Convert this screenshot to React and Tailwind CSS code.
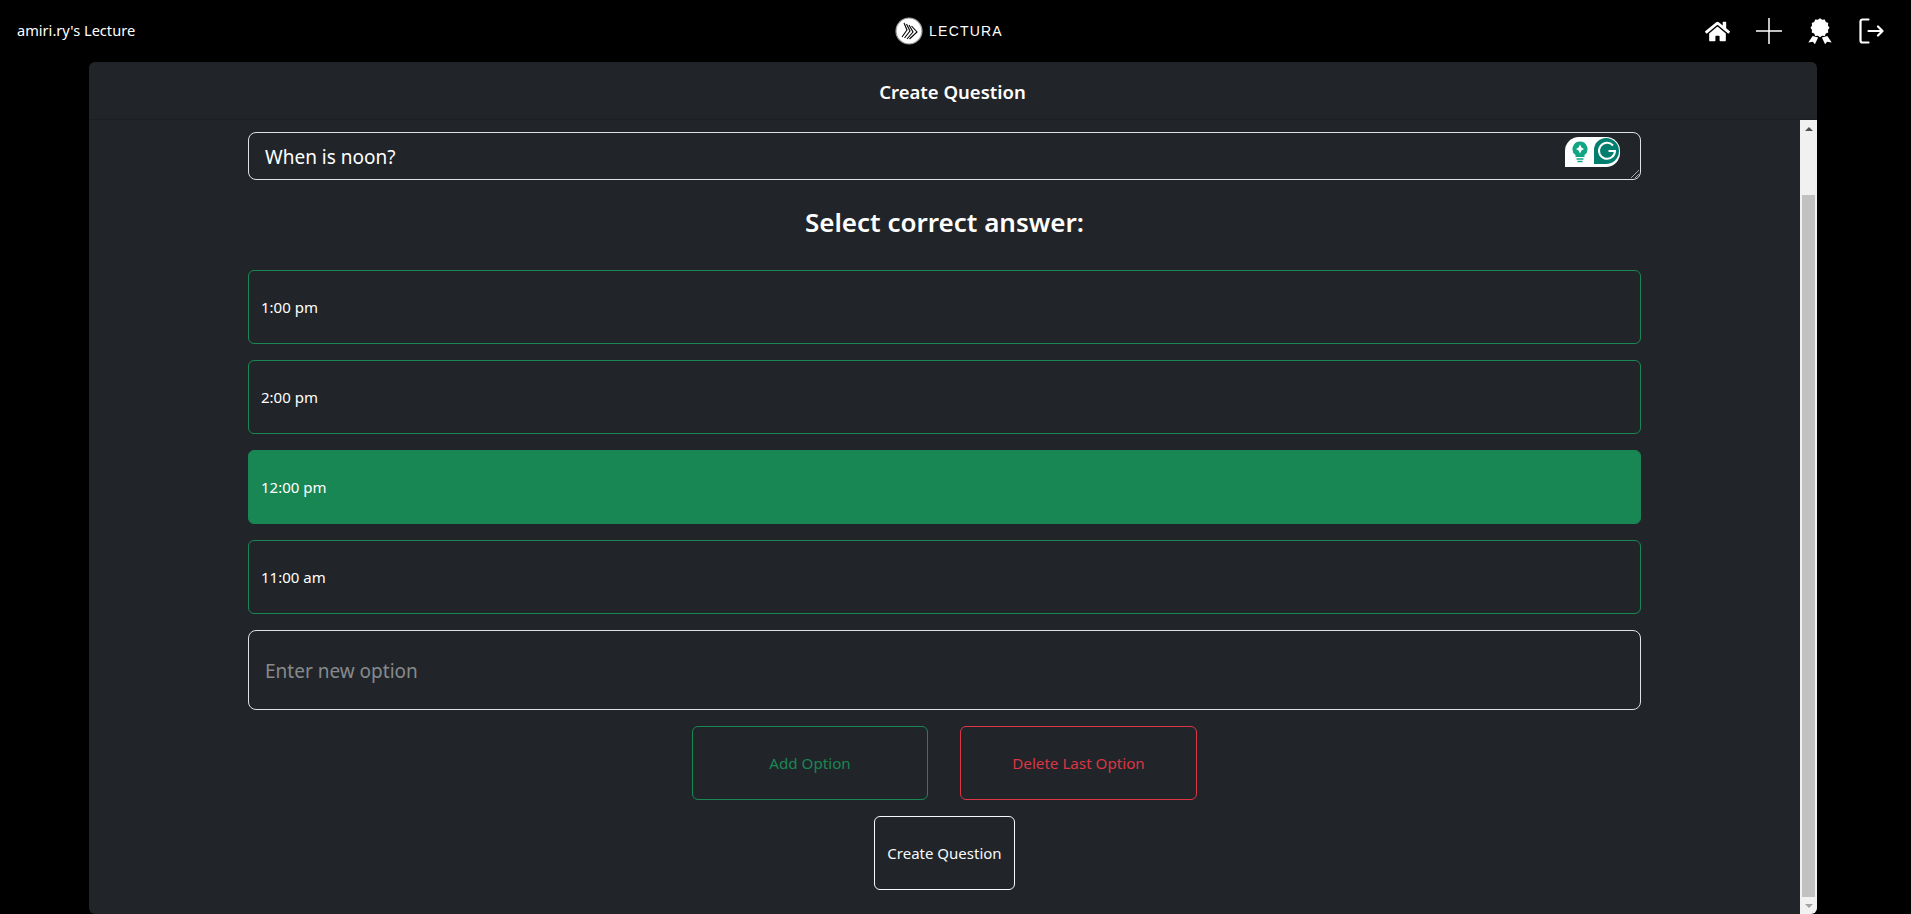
import React from "react";
import { FaHome } from "react-icons/fa";

function Logo() {
  return (
    <div className="flex items-center gap-[6px] ml-[-3px]">
      <svg width="28" height="28" viewBox="0 0 28 28">
        <circle cx="14" cy="14" r="13" fill="#fff" stroke="#999" strokeWidth="1.2" />
        <g fill="none" stroke="#000" strokeWidth="1.1">
          <path d="M9 6 L12 13 L7 20" />
          <path d="M11.5 7 L15 14 L9.5 21" />
          <path d="M14 8 L18 15 L12 22" />
          <path d="M16.5 9 L22 15 L14.5 22" />
        </g>
      </svg>
      <span className="text-white font-['Liberation_Sans',sans-serif] text-[14px] tracking-[1.2px] leading-none">LECTURA</span>
    </div>
  );
}

function Award() {
  const pts = [];
  for (let i = 0; i < 24; i++) {
    const r = i % 2 === 0 ? 8.8 : 7.6;
    const a = (i * Math.PI) / 12;
    pts.push(`${(12 + r * Math.sin(a)).toFixed(2)},${(9 - r * Math.cos(a)).toFixed(2)}`);
  }
  return (
    <svg width="26" height="26" viewBox="0 0 24 24" fill="#fff">
      <polygon points={pts.join(" ")} />
      <path d="M5.2 16.5L1.2 22.6l4.2-.6 1.9 2.2 3-6.1z" />
      <path d="M18.8 16.5l4 6.1-4.2-.6-1.9 2.2-3-6.1z" />
    </svg>
  );
}

function Option({ label, active }) {
  return (
    <div className={active
      ? "h-[74px] shrink-0 flex items-center px-3 rounded-md border border-[#198754] bg-[#198754] text-white text-[15px]"
      : "h-[74px] shrink-0 flex items-center px-3 rounded-md border border-[#198754] text-white text-[15px]"}>
      {label}
    </div>
  );
}

function Scrollbar() {
  return (
    <div className="w-[17px] shrink-0 bg-[#f1f1f1] flex flex-col items-center">
      <div className="h-[17px] shrink-0 flex items-center justify-center">
        <div className="w-0 h-0 border-x-[4px] border-x-transparent border-b-[4px] border-b-[#505050]" />
      </div>
      <div className="flex-1" />
      <div className="w-[13px] h-[702px] shrink-0 bg-[#c1c1c1]" />
      <div className="h-[17px] shrink-0 flex items-center justify-center">
        <div className="w-0 h-0 border-x-[4px] border-x-transparent border-t-[4px] border-t-[#a3a3a3]" />
      </div>
    </div>
  );
}

function Grammarly() {
  return (
    <div className="absolute right-[20px] top-[4px] w-[55px] h-[30px] bg-white rounded-tl-[14px] rounded-r-[14px] flex">
      <div className="w-[29px] flex items-center justify-center">
        <svg width="16" height="22" viewBox="0 0 16 22">
          <path d="M8 0.5a7.5 7.5 0 0 0-4.5 13.5v2h9v-2A7.5 7.5 0 0 0 8 0.5z" fill="#11a683" />
          <path d="M8 3.5 L9.5 6.5 L12 8 L9.5 9.5 L8 12.5 L6.5 9.5 L4 8 L6.5 6.5z" fill="#fff" />
          <path d="M4.5 18h7M5.5 20.5h5" stroke="#11a683" strokeWidth="1.6" />
        </svg>
      </div>
      <div className="w-[25px] h-[26px] mt-[1px] bg-[#027e6f] rounded-tl-[12px] rounded-r-[13px] flex items-center justify-center">
        <svg width="20" height="20" viewBox="0 0 20 20" fill="none">
          <path d="M16 4.5A8 8 0 1 0 18 10h-6.5" stroke="#fff" strokeWidth="2" />
        </svg>
      </div>
    </div>
  );
}

export default function App() {
  return (
    <div className="h-[914px] w-full bg-black overflow-hidden flex flex-col font-['Noto_Sans','Open_Sans',sans-serif] text-white">
      <header className="h-[62px] shrink-0 grid grid-cols-3 items-center pl-[17px] pr-[27px]">
        <div className="text-[14.6px]">amiri.ry's Lecture</div>
        <div className="flex justify-center"><Logo /></div>
        <div className="flex justify-end items-center gap-[25px]">
          <span className="w-[26px] h-[26px] flex items-center justify-center"><FaHome size={25} className="text-white" /></span>
          <svg width="26" height="26" viewBox="0 0 26 26" stroke="#fff" strokeWidth="1.5"><path d="M13 0v26M0 13h26" /></svg>
          <Award />
          <svg width="26" height="26" viewBox="0 0 26 26" fill="none" stroke="#fff" strokeWidth="2.2" strokeLinecap="round" strokeLinejoin="round">
            <path d="M10.5 1.5H4.5a2 2 0 0 0-2 2v19a2 2 0 0 0 2 2h6" />
            <path d="M10.5 13h14M20 8.5l4.5 4.5-4.5 4.5" />
          </svg>
        </div>
      </header>

      <div className="ml-[89px] w-[1728px] flex-1 min-h-0 bg-[#212529] rounded-md flex flex-col overflow-hidden">
        <div className="h-[58px] shrink-0 flex items-center justify-center border-b border-[#1b1e22]">
          <h1 className="text-[18.5px] font-semibold mt-[2px] -ml-[1px]">Create Question</h1>
        </div>
        <div className="flex-1 min-h-0 flex">
          <div className="flex-1 min-w-0 pl-[159px] pr-[159px] pt-[12px] flex flex-col">
            <div className="relative h-[48px] shrink-0 rounded-lg border border-[#dee2e6] flex items-center px-4 text-[19px]">
              <span className="mt-[2px]">When is noon?</span>
              <Grammarly />
              <svg className="absolute right-[1px] bottom-[1px]" width="9" height="9" viewBox="0 0 9 9" stroke="#aaa" strokeWidth="1"><path d="M1 9L9 1M5 9L9 5" /></svg>
            </div>
            <h2 className="h-[43px] mt-[21px] shrink-0 flex items-center justify-center text-[26px] font-semibold">Select correct answer:</h2>
            <div className="mt-[26px] flex flex-col gap-4">
              <Option label="1:00 pm" />
              <Option label="2:00 pm" />
              <Option label="12:00 pm" active />
              <Option label="11:00 am" />
            </div>
            <div className="mt-4 h-[80px] shrink-0 rounded-lg border border-[#dee2e6] flex items-center px-4 text-[19px] text-[#878a8d]">
              <span className="mt-[2px]">Enter new option</span>
            </div>
            <div className="mt-4 flex justify-center gap-[32px]">
              <div className="w-[236px] h-[74px] flex items-center justify-center rounded-md border border-[#198754] text-[#198754] text-[15.2px]">Add Option</div>
              <div className="w-[237px] h-[74px] flex items-center justify-center rounded-md border border-[#dc3545] text-[#dc3545] text-[15.2px]">Delete Last Option</div>
            </div>
            <div className="mt-4 flex justify-center">
              <div className="w-[141px] h-[74px] flex items-center justify-center rounded-md border border-[#f8f9fa] text-[#f8f9fa] text-[15px]">Create Question</div>
            </div>
          </div>
          <Scrollbar />
        </div>
      </div>
    </div>
  );
}
